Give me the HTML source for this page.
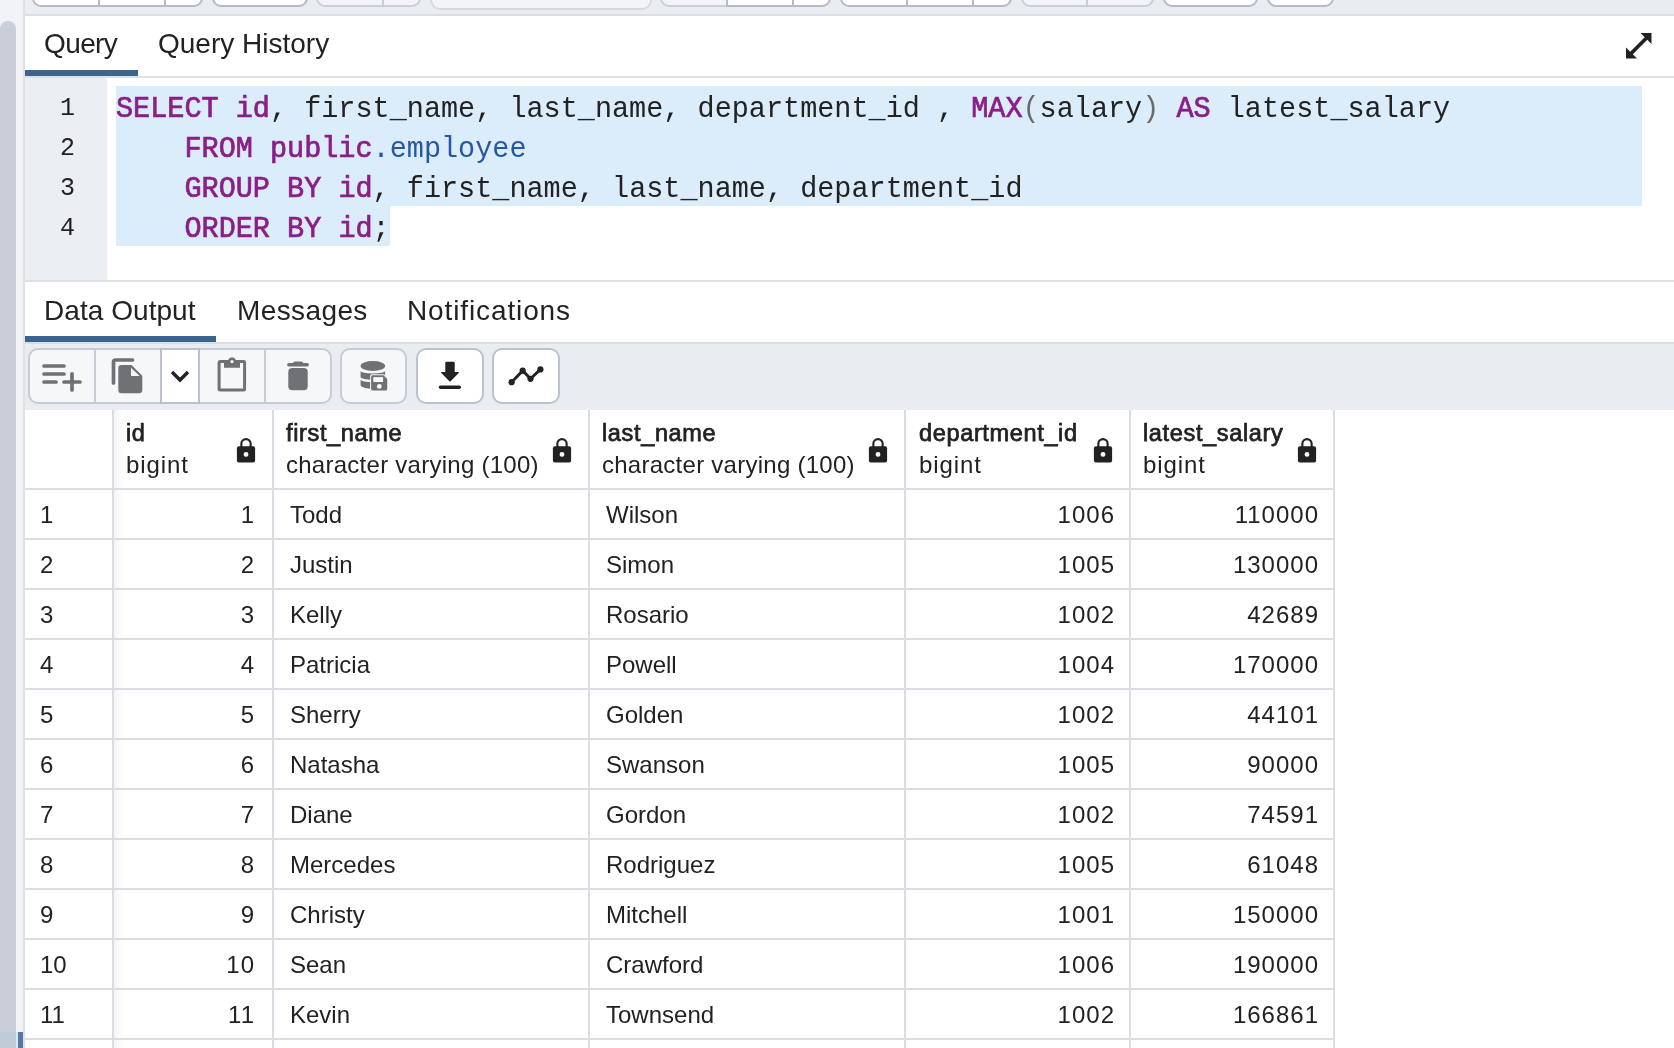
<!DOCTYPE html>
<html><head><meta charset="utf-8">
<style>
*{box-sizing:border-box;margin:0;padding:0}
html,body{width:1674px;height:1048px;overflow:hidden;background:#fff;font-family:"Liberation Sans",sans-serif;color:#222}
.abs{position:absolute}
#leftstrip{left:0;top:0;width:23px;height:1048px;background:#f1f3f6}
#thumb{left:0;top:21px;width:16px;height:1011px;background:#c9ced8;border-radius:8px 8px 0 0}
#thumb2{left:0;top:1032px;width:16px;height:16px;background:#c1cad7}
#selbar{left:18px;top:1032px;width:5px;height:16px;background:#56789e}
#selbar2{left:16px;top:1032px;width:2px;height:16px;background:#d9e8f5}
#vborder{left:23px;top:0;width:2px;height:1048px;background:#dde1e6}
#toptb{left:25px;top:0;width:1649px;height:14px;background:#e9ecf0}
#toptbb{left:25px;top:14px;width:1649px;height:2px;background:#dadee3}
.tbtn{position:absolute;top:-20px;height:27px;border:2px solid #b5bbc7;border-radius:9px;background:#fff}
.tbtn.dis{background:#f3f4f7;border-color:#c9ced7}
.tdiv{position:absolute;top:-20px;height:26px;width:2px;background:#b5bbc7}
.tdiv.dis{background:#c9ced7}
.tab{position:absolute;font-size:28px;color:#222;white-space:pre}
.uline{position:absolute;height:6px;background:#3d648c}
.hline{position:absolute;height:2px;background:#dde1e6}
#gutter{left:25px;top:78px;width:82px;height:202px;background:#ebeef3}
.ln{position:absolute;width:50px;left:25px;height:40px;line-height:40px;text-align:right;font-family:"Liberation Mono",monospace;font-size:25px;color:#222;transform:scaleY(1.06);transform-origin:0 27.6px}
.sel{position:absolute;background:#dbecfa}
.cl{position:absolute;left:116px;height:40px;font-family:"Liberation Mono",monospace;font-size:28.5px;white-space:pre;color:#222;line-height:40px;transform:scaleY(1.05);transform-origin:0 27.6px}
.kw{color:#8b1e88;font-weight:normal;-webkit-text-stroke:0.7px #8b1e88}
.bl{color:#2557a2}
.pr{color:#6a6a6a}
#dtb{left:25px;top:344px;width:1649px;height:66px;background:#e9ecf0}
.btn{position:absolute;top:348px;height:56px;border:2px solid #c6cbd4;border-radius:10px;background:#f6f7f9}
.btn.w{background:#fff;border-color:#bcc2cd}
.bdiv{position:absolute;top:348px;height:56px;width:2px;background:#c6cbd4}
.ico{position:absolute}
.vl{position:absolute;top:410px;width:2px;height:638px;background:#dadde3}
.hl{position:absolute;left:25px;width:1310px;height:2px;background:#dadde3}
.shadow{position:absolute;left:114px;top:410px;width:10px;height:638px;background:linear-gradient(to right,rgba(0,0,0,0.045),rgba(0,0,0,0))}
.hn{position:absolute;top:418px;font-size:23.5px;font-weight:normal;-webkit-text-stroke:0.75px #222;line-height:30px;white-space:pre;color:#222;letter-spacing:0.65px}
.ht{position:absolute;top:450px;font-size:24px;line-height:30px;white-space:pre;color:#222;letter-spacing:0.26px}
.lock{position:absolute;top:437px}
.c{position:absolute;font-size:24px;line-height:48px;white-space:pre;color:#222}
.c.r{letter-spacing:1px}
</style></head><body>
<div id="root" style="position:absolute;left:0;top:0;width:1674px;height:1048px;overflow:hidden;will-change:transform;background:#fff">
<svg width="0" height="0" style="position:absolute">
<defs>
<g id="lk" fill="#222">
<path d="M5.35 10 V6.8 A4.65 4.65 0 0 1 14.65 6.8 V10" fill="none" stroke="#222" stroke-width="2.1"/>
<rect x="0.9" y="9.2" width="18.2" height="16.3" rx="2"/>
<circle cx="10" cy="17.4" r="2.4" fill="#fff"/>
</g>
</defs>
</svg>
<div class="abs" id="leftstrip"></div>
<div class="abs" id="thumb"></div>
<div class="abs" id="thumb2"></div>
<div class="abs" id="selbar2"></div>
<div class="abs" id="selbar"></div>
<div class="abs" id="vborder"></div>
<div class="abs" id="toptb"></div>
<div class="tbtn" style="left:32px;width:171px"></div>
<div class="tdiv" style="left:98px"></div>
<div class="tdiv" style="left:164px"></div>
<div class="tbtn" style="left:212px;width:96px"></div>
<div class="tbtn dis" style="left:316px;width:105px"></div>
<div class="tdiv dis" style="left:382px"></div>
<div class="tbtn dis" style="left:430px;width:222px;height:30px;border-color:#d5d8de;border-radius:10px"></div>
<div class="tbtn dis" style="left:660px;width:171px"></div>
<div class="tbtn" style="left:726px;width:105px;border-radius:0 9px 9px 0"></div>
<div class="tdiv" style="left:792px"></div>
<div class="tbtn" style="left:840px;width:172px"></div>
<div class="tdiv" style="left:906px"></div>
<div class="tdiv" style="left:972px"></div>
<div class="tbtn dis" style="left:1021px;width:133px"></div>
<div class="tdiv dis" style="left:1086px"></div>
<div class="tbtn" style="left:1163px;width:95px"></div>
<div class="tbtn" style="left:1267px;width:67px"></div>
<div class="abs" id="toptbb"></div>

<!-- query tabs -->
<div class="tab" style="left:44px;top:28px;letter-spacing:-0.6px">Query</div>
<div class="tab" style="left:158px;top:28px">Query History</div>
<div class="uline" style="left:25px;top:70px;width:113px"></div>
<div class="hline" style="left:25px;top:76px;width:1649px"></div>
<svg class="ico" style="left:1624px;top:31px" width="30" height="30" viewBox="0 0 30 30"><path fill="#222" d="M2 27.5 V16.5 L6.2 20.7 L20.7 6.2 L16.5 2 H27.5 V13 L23.3 8.8 L8.8 23.3 L13 27.5 Z"/></svg>

<!-- editor -->
<div class="abs" id="gutter"></div>
<div class="sel" style="left:116px;top:86px;width:1526px;height:120px"></div>
<div class="sel" style="left:116px;top:206px;width:274px;height:40px"></div>
<div class="ln" style="top:89px">1</div>
<div class="ln" style="top:129px">2</div>
<div class="ln" style="top:169px">3</div>
<div class="ln" style="top:209px">4</div>
<div class="cl" style="top:90px"><span class="kw">SELECT</span> <span class="kw">id</span>, first_name, last_name, department_id , <span class="kw">MAX</span><span class="pr">(</span>salary<span class="pr">)</span> <span class="kw">AS</span> latest_salary</div>
<div class="cl" style="top:130px">    <span class="kw">FROM</span> <span class="kw">public</span><span class="bl">.employee</span></div>
<div class="cl" style="top:170px">    <span class="kw">GROUP</span> <span class="kw">BY</span> <span class="kw">id</span>, first_name, last_name, department_id</div>
<div class="cl" style="top:210px">    <span class="kw">ORDER</span> <span class="kw">BY</span> <span class="kw">id</span>;</div>
<div class="hline" style="left:25px;top:280px;width:1649px"></div>

<!-- data output tabs -->
<div class="tab" style="left:44px;top:295px;letter-spacing:0.05px">Data Output</div>
<div class="tab" style="left:237px;top:295px;letter-spacing:0.39px">Messages</div>
<div class="tab" style="left:407px;top:295px;letter-spacing:0.88px">Notifications</div>
<div class="uline" style="left:25px;top:336px;width:191px"></div>
<div class="hline" style="left:25px;top:342px;width:1649px;background:#dadee3"></div>
<div class="abs" id="dtb"></div>

<!-- data toolbar -->
<div class="btn" style="left:28px;width:304px"></div>
<div class="abs" style="left:161px;top:350px;width:38px;height:52px;background:#fff"></div>
<div class="bdiv" style="left:94px"></div>
<div class="bdiv" style="left:160px;background:#bcc2cd"></div>
<div class="bdiv" style="left:198px;background:#bcc2cd"></div>
<div class="abs" style="left:160px;top:348px;width:40px;height:2px;background:#bcc2cd"></div>
<div class="abs" style="left:160px;top:402px;width:40px;height:2px;background:#bcc2cd"></div>
<div class="bdiv" style="left:264px"></div>
<div class="btn" style="left:340px;width:67px"></div>
<div class="btn w" style="left:416px;width:68px"></div>
<div class="btn w" style="left:492px;width:68px"></div>

<svg class="ico" style="left:0;top:0" width="600" height="410" viewBox="0 0 600 410">
 <g stroke="#707174" stroke-width="3.7" stroke-linecap="round" fill="none">
  <path d="M44 366 H64 M44 374 H64 M44 382 H56 M64 382 H80 M72 373.8 V390"/>
  <path d="M113.5 383 V362 Q113.5 360 115.5 360 H132.5"/>
 </g>
 <path fill="#707174" d="M121.5 365 H131.5 L142.3 375.8 V390 Q142.3 393.3 139 393.3 H121.5 Q118.3 393.3 118.3 390 V368.2 Q118.3 365 121.5 365 Z"/>
 <path fill="#f6f7f9" d="M131 367.7 V376 H139.7 Z"/>
 <path d="M172 372 L180 380 L188 372" stroke="#222" stroke-width="3.4" fill="none"/>
 <g fill="#707174">
  <path d="M220 360 H228.1 A4.2 4.2 0 0 1 235.9 360 H244 Q246.1 360 246.1 362.5 V389 Q246.1 391.5 243.6 391.5 H220.1 Q217.6 391.5 217.6 389 V362.5 Q217.6 360 220 360 Z M220.6 363 V388.5 H243.1 V363 H240 V367.8 H224 V363 Z"/>
 </g>
 <circle cx="232" cy="361.6" r="1.6" fill="#f6f7f9"/>
 <g fill="#707174">
  <path d="M288.8 364.7 H307.2" stroke="#707174" stroke-width="3.4" stroke-linecap="round"/>
  <path d="M293 363 Q293 361.5 295 361.5 H301 Q303 361.5 303 363 Z"/>
  <rect x="288.3" y="368" width="19.4" height="22.2" rx="4"/>
 </g>
 <g fill="#707174">
  <ellipse cx="372.85" cy="366" rx="12.25" ry="4.9"/>
  <path d="M360.6 370.9 A12.25 2.5 0 0 0 385.1 370.9 V377.1 A12.25 2.6 0 0 1 360.6 377.1 Z"/>
  <path d="M360.6 379.5 A12.25 2.7 0 0 0 385.1 379.5 V385.1 A12.25 3.6 0 0 1 360.6 385.1 Z"/>
 </g>
 <path fill="#f6f7f9" d="M372.1 374.2 H384 L388.2 378.6 V389.6 Q388.2 391.6 386.2 391.6 H372.1 Q370.1 391.6 370.1 389.6 V376.2 Q370.1 374.2 372.1 374.2 Z"/>
 <path fill="#707174" d="M372.7 375.2 H383.5 L387.2 379 V389 Q387.2 390.6 385.6 390.6 H372.7 Q371.1 390.6 371.1 389 V376.8 Q371.1 375.2 372.7 375.2 Z"/>
 <rect x="373.3" y="377.1" width="9.8" height="4.9" fill="#f6f7f9"/>
 <circle cx="379.3" cy="386.4" r="2.4" fill="#f6f7f9"/>
 <g fill="#222">
  <path d="M446.3 361.7 H453.7 Q454.7 361.7 454.7 362.7 V372 H458.3 Q459.5 372 458.7 373 L450.6 381.3 Q450 381.9 449.4 381.3 L441.3 373 Q440.5 372 441.7 372 H445.3 V362.7 Q445.3 361.7 446.3 361.7 Z"/>
  <path d="M440.5 387.2 H459.3" stroke="#222" stroke-width="3.4" stroke-linecap="round"/>
 </g>
 <g fill="#222">
  <path d="M511.6 382.2 L522.7 370.7 L530.5 378.8 L540.4 369.4" stroke="#222" stroke-width="2.9" fill="none"/>
  <circle cx="511.6" cy="382.2" r="3.1"/>
  <circle cx="522.7" cy="370.7" r="3.1"/>
  <circle cx="530.5" cy="378.8" r="3.1"/>
  <circle cx="540.4" cy="369.4" r="3.1"/>
 </g>
</svg>

<!-- table -->
<div class="vl" style="left:112px"></div>
<div class="vl" style="left:272px"></div>
<div class="vl" style="left:588px"></div>
<div class="vl" style="left:904px"></div>
<div class="vl" style="left:1129px"></div>
<div class="vl" style="left:1333px"></div>
<div class="shadow"></div>
<div class="hl" style="top:488px"></div>
<div class="hl" style="top:538px"></div>
<div class="hl" style="top:588px"></div>
<div class="hl" style="top:638px"></div>
<div class="hl" style="top:688px"></div>
<div class="hl" style="top:738px"></div>
<div class="hl" style="top:788px"></div>
<div class="hl" style="top:838px"></div>
<div class="hl" style="top:888px"></div>
<div class="hl" style="top:938px"></div>
<div class="hl" style="top:988px"></div>
<div class="hl" style="top:1038px"></div>
<div class="hn" style="left:126px">id</div>
<div class="ht" style="left:126px;letter-spacing:0.9px">bigint</div>
<svg class="lock" style="left:236px" width="20" height="26" viewBox="0 0 20 26"><use href="#lk"/></svg>
<div class="hn" style="left:286px">first_name</div>
<div class="ht" style="left:286px;letter-spacing:0.26px">character varying (100)</div>
<svg class="lock" style="left:552px" width="20" height="26" viewBox="0 0 20 26"><use href="#lk"/></svg>
<div class="hn" style="left:602px">last_name</div>
<div class="ht" style="left:602px;letter-spacing:0.26px">character varying (100)</div>
<svg class="lock" style="left:868px" width="20" height="26" viewBox="0 0 20 26"><use href="#lk"/></svg>
<div class="hn" style="left:919px">department_id</div>
<div class="ht" style="left:919px;letter-spacing:0.9px">bigint</div>
<svg class="lock" style="left:1093px" width="20" height="26" viewBox="0 0 20 26"><use href="#lk"/></svg>
<div class="hn" style="left:1143px">latest_salary</div>
<div class="ht" style="left:1143px;letter-spacing:0.9px">bigint</div>
<svg class="lock" style="left:1297px" width="20" height="26" viewBox="0 0 20 26"><use href="#lk"/></svg>
<div class="c" style="top:491px;left:40px">1</div>
<div class="c r" style="top:491px;right:1419px">1</div>
<div class="c" style="top:491px;left:290px">Todd</div>
<div class="c" style="top:491px;left:606px">Wilson</div>
<div class="c r" style="top:491px;right:559px">1006</div>
<div class="c r" style="top:491px;right:355px">110000</div>
<div class="c" style="top:541px;left:40px">2</div>
<div class="c r" style="top:541px;right:1419px">2</div>
<div class="c" style="top:541px;left:290px">Justin</div>
<div class="c" style="top:541px;left:606px">Simon</div>
<div class="c r" style="top:541px;right:559px">1005</div>
<div class="c r" style="top:541px;right:355px">130000</div>
<div class="c" style="top:591px;left:40px">3</div>
<div class="c r" style="top:591px;right:1419px">3</div>
<div class="c" style="top:591px;left:290px">Kelly</div>
<div class="c" style="top:591px;left:606px">Rosario</div>
<div class="c r" style="top:591px;right:559px">1002</div>
<div class="c r" style="top:591px;right:355px">42689</div>
<div class="c" style="top:641px;left:40px">4</div>
<div class="c r" style="top:641px;right:1419px">4</div>
<div class="c" style="top:641px;left:290px">Patricia</div>
<div class="c" style="top:641px;left:606px">Powell</div>
<div class="c r" style="top:641px;right:559px">1004</div>
<div class="c r" style="top:641px;right:355px">170000</div>
<div class="c" style="top:691px;left:40px">5</div>
<div class="c r" style="top:691px;right:1419px">5</div>
<div class="c" style="top:691px;left:290px">Sherry</div>
<div class="c" style="top:691px;left:606px">Golden</div>
<div class="c r" style="top:691px;right:559px">1002</div>
<div class="c r" style="top:691px;right:355px">44101</div>
<div class="c" style="top:741px;left:40px">6</div>
<div class="c r" style="top:741px;right:1419px">6</div>
<div class="c" style="top:741px;left:290px">Natasha</div>
<div class="c" style="top:741px;left:606px">Swanson</div>
<div class="c r" style="top:741px;right:559px">1005</div>
<div class="c r" style="top:741px;right:355px">90000</div>
<div class="c" style="top:791px;left:40px">7</div>
<div class="c r" style="top:791px;right:1419px">7</div>
<div class="c" style="top:791px;left:290px">Diane</div>
<div class="c" style="top:791px;left:606px">Gordon</div>
<div class="c r" style="top:791px;right:559px">1002</div>
<div class="c r" style="top:791px;right:355px">74591</div>
<div class="c" style="top:841px;left:40px">8</div>
<div class="c r" style="top:841px;right:1419px">8</div>
<div class="c" style="top:841px;left:290px">Mercedes</div>
<div class="c" style="top:841px;left:606px">Rodriguez</div>
<div class="c r" style="top:841px;right:559px">1005</div>
<div class="c r" style="top:841px;right:355px">61048</div>
<div class="c" style="top:891px;left:40px">9</div>
<div class="c r" style="top:891px;right:1419px">9</div>
<div class="c" style="top:891px;left:290px">Christy</div>
<div class="c" style="top:891px;left:606px">Mitchell</div>
<div class="c r" style="top:891px;right:559px">1001</div>
<div class="c r" style="top:891px;right:355px">150000</div>
<div class="c" style="top:941px;left:40px">10</div>
<div class="c r" style="top:941px;right:1419px">10</div>
<div class="c" style="top:941px;left:290px">Sean</div>
<div class="c" style="top:941px;left:606px">Crawford</div>
<div class="c r" style="top:941px;right:559px">1006</div>
<div class="c r" style="top:941px;right:355px">190000</div>
<div class="c" style="top:991px;left:40px">11</div>
<div class="c r" style="top:991px;right:1419px">11</div>
<div class="c" style="top:991px;left:290px">Kevin</div>
<div class="c" style="top:991px;left:606px">Townsend</div>
<div class="c r" style="top:991px;right:559px">1002</div>
<div class="c r" style="top:991px;right:355px">166861</div>
</div>
</body></html>
